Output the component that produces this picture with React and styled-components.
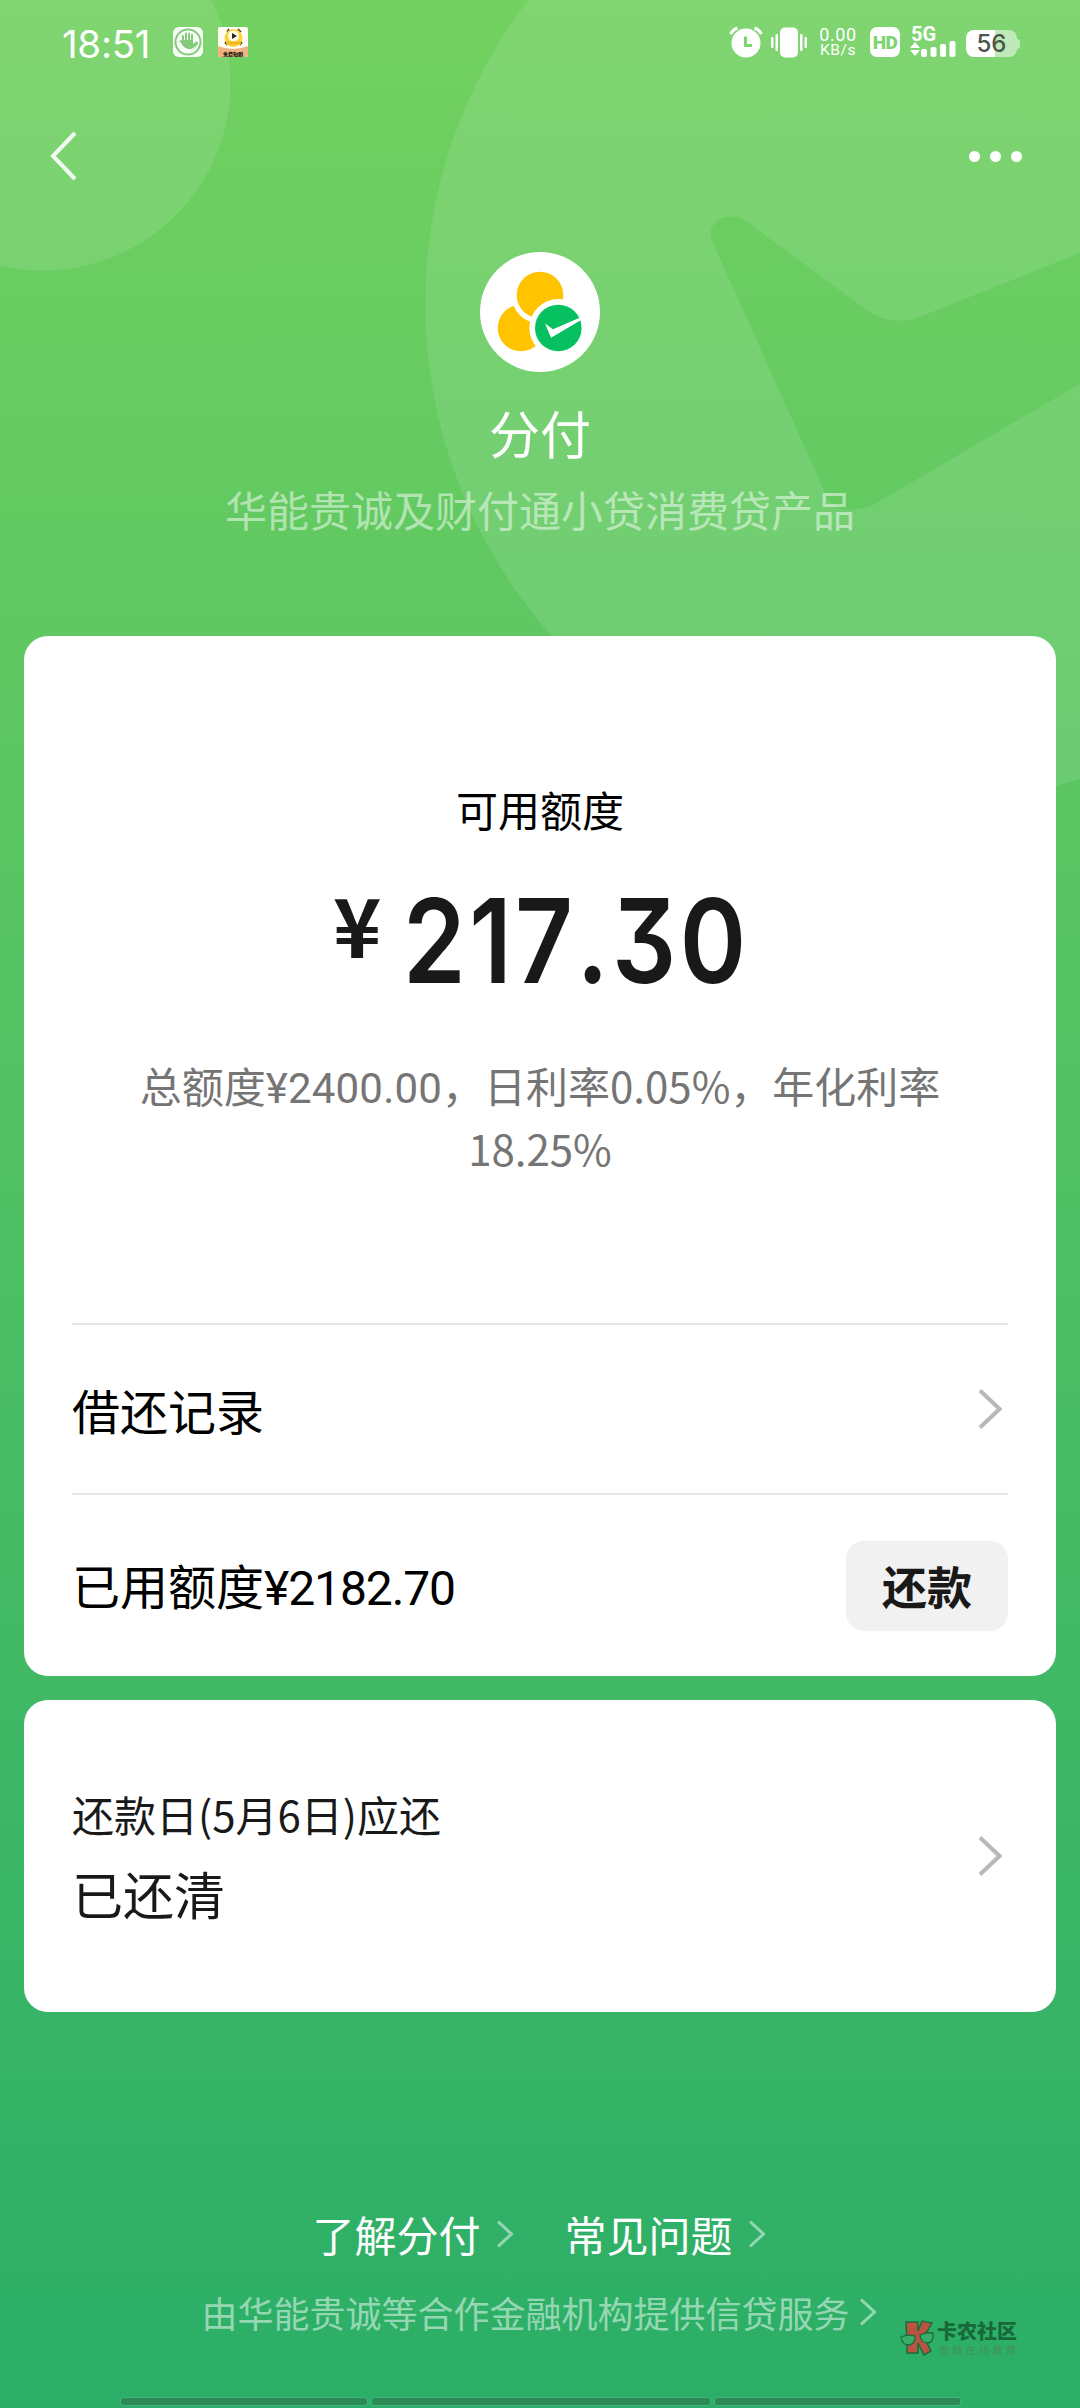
import styled, { createGlobalStyle } from "styled-components";

const GlobalStyle = createGlobalStyle`
    * {
        box-sizing: border-box;
    }

    body {
        margin: 0;
        font-family: "Noto Sans CJK SC", sans-serif;
    }
`;

const footerLinks = [
    { id: 1, label: '了解分付' },
    { id: 2, label: '常见问题' },
];

function Backdrop() {
    return (
        <BackdropSvg viewBox="0 0 1080 900">
            <circle cx="43" cy="83" r="187.5" fill="#fff" fillOpacity="0.1" />
            <path
                fill="#fff"
                fillOpacity="0.1"
                fillRule="evenodd"
                d="M925 -196a499.700 499.700 0 1 0 0.010 0Z
                   M713 243C704 226 722 210 743 219L868 311Q891 326 917 318L1100 245V372L873 505Q832 520 823 488Z"
            />
        </BackdropSvg>
    );
}

function Arrow({ width, height, color, stroke }) {
    return (
        <svg width={width} height={height} viewBox={`0 0 ${width} ${height}`} fill="none">
            <path
                d={`M2 1.500L${width - 2.5} ${height / 2}L2 ${height - 1.5}`}
                stroke={color}
                strokeWidth={stroke}
            />
        </svg>
    );
}

function StatusIcons() {
    return (
        <>
            <svg width="34" height="32" viewBox="0 0 34 32">
                <circle cx="17" cy="17" r="14.500" fill="#fff" />
                <path d="M1.500 8Q4 3.500 8.500 2M32.500 8Q30 3.500 25.500 2" stroke="#fff" strokeWidth="3" fill="none" />
                <path d="M16.500 10.500V19.500H23" stroke="#7dd570" strokeWidth="3" fill="none" />
            </svg>
            <VibrateSvg width="36" height="32" viewBox="0 0 36 32" fill="#fff">
                <rect x="9" y="1.500" width="18" height="30" rx="5" />
                <rect x="0" y="11" width="2.500" height="11" rx="1" />
                <rect x="4.500" y="8" width="2.500" height="17" rx="1" />
                <rect x="29" y="8" width="2.500" height="17" rx="1" />
                <rect x="33.500" y="11" width="2.500" height="11" rx="1" />
            </VibrateSvg>
        </>
    );
}

export default function App() {
    return (
        <Screen>
            <GlobalStyle />
            <Backdrop />

            <StatusBar>
                <Clock>18:51</Clock>
                <svg width="30" height="30" viewBox="0 0 30 30">
                    <rect width="30" height="30" rx="6" fill="#fff" fillOpacity="0.95" />
                    <circle cx="15" cy="15" r="12.500" fill="none" stroke="#83cb7b" strokeWidth="2" />
                    <path d="M10 14V9M13 13V6.500M16 13V6.500M19 14V8" stroke="#83cb7b" strokeWidth="2" strokeLinecap="round" />
                    <path d="M9 13H20V17L24 14L25 17Q21 25 14 24Q8 22 5 14Z" fill="#83cb7b" />
                    <path d="M6 17Q9 25 17 24Q22 22 24 18Q16 26 10 19L5 12Z" fill="#fff" />
                </svg>
                <AppBadge width="30" height="30" viewBox="0 0 30 30">
                    <rect width="30" height="30" rx="2" fill="#fffdf4" />
                    <path d="M0 19Q15 25 30 19V28Q30 30 28 30H2Q0 30 0 28Z" fill="#f0b183" />
                    <path d="M9 5L11 2M20 2L23 5M7 15L9 18M24 15L22 18" stroke="#4a3b18" strokeWidth="1.500" />
                    <circle cx="15.500" cy="11" r="9" fill="#fbd23c" />
                    <circle cx="15.500" cy="9" r="5.500" fill="#fffbe9" />
                    <path d="M14 6L19 9L14 12Z" fill="#2c2414" />
                    <path d="M8 16H23" stroke="#f7b51e" strokeWidth="3" />
                    <text x="15" y="28.600" textAnchor="middle" fontSize="5" fontWeight="900" fill="#231b12">免费短剧</text>
                </AppBadge>
                <Spacer />
                <StatusIcons />
                <NetSpeed>
                    <span>0.00</span>
                    <small>KB/s</small>
                </NetSpeed>
                <HdBadge>HD</HdBadge>
                <Signal>
                    <SignalType>5G</SignalType>
                    <svg width="46" height="16" viewBox="0 0 46 16" fill="#fff">
                        <path d="M0 7L5 1L10 7ZM0 9L5 15L10 9Z" />
                        <rect x="11" y="8" width="6" height="8" rx="2" />
                        <rect x="20.500" y="6" width="6" height="10" rx="2" />
                        <rect x="30" y="3" width="6" height="13" rx="2" />
                        <rect x="39.500" y="0" width="6" height="16" rx="2" />
                    </svg>
                </Signal>
                <Battery>56</Battery>
                <BatteryCap />
            </StatusBar>

            <NavBar>
                <svg width="30" height="52" viewBox="0 0 30 52" fill="none">
                    <path d="M26 3L4 26L26 49" stroke="#fff" strokeOpacity="0.9" strokeWidth="4" />
                </svg>
                <Dots>
                    <i />
                    <i />
                    <i />
                </Dots>
            </NavBar>

            <Header>
                <Logo viewBox="0 0 120 120">
                    <circle cx="60" cy="60" r="60" fill="#fff" />
                    <circle cx="41" cy="76" r="23.300" fill="#ffc300" />
                    <circle cx="60" cy="43" r="28.500" fill="#fff" />
                    <circle cx="60" cy="43" r="23.300" fill="#ffc300" />
                    <circle cx="78.300" cy="76" r="29" fill="#fff" />
                    <circle cx="78.300" cy="76" r="23.300" fill="#07c160" />
                    <path d="M65 71.500L73 77.300L99 66L102 67.500L71 85.700Z" fill="#fff" />
                </Logo>
                <Title>分付</Title>
                <Subtitle>华能贵诚及财付通小贷消费贷产品</Subtitle>
            </Header>

            <Card $height={1040}>
                <Quota>
                    <QuotaLabel>可用额度</QuotaLabel>
                    <Amount>
                        <Yen>¥</Yen>
                        <Figure>217.30</Figure>
                    </Amount>
                    <QuotaNote>
                        总额度<Num $spacing={0.2}>¥2400.00</Num>，日利率0.05%，年化利率
                        <br />
                        18.25%
                    </QuotaNote>
                </Quota>
                <Row $height={170}>
                    <span>借还记录</span>
                    <ArrowSlot>
                        <Arrow width={24} height={40} color="#b8b8b8" stroke={4} />
                    </ArrowSlot>
                </Row>
                <Row $height={180}>
                    <span>已用额度<Num $spacing={-1.1}>¥2182.70</Num></span>
                    <RepayButton>还款</RepayButton>
                </Row>
            </Card>

            <Card $height={312}>
                <Bill>
                    <BillText>
                        <BillDate>还款日(5月6日)应还</BillDate>
                        <BillState>已还清</BillState>
                    </BillText>
                    <ArrowSlot>
                        <Arrow width={24} height={40} color="#b8b8b8" stroke={4} />
                    </ArrowSlot>
                </Bill>
            </Card>

            <Footer>
                <FooterLinks>
                    {footerLinks.map((link) => (
                        <FooterLink key={link.id}>
                            {link.label}
                            <Arrow width={18} height={28} color="#95d7b3" stroke={3} />
                        </FooterLink>
                    ))}
                </FooterLinks>
                <Provider>
                    由华能贵诚等合作金融机构提供信贷服务
                    <Arrow width={18} height={28} color="#95d7b3" stroke={3} />
                </Provider>
            </Footer>

            <HomeBar>
                <HomeSegment $width={246} />
                <HomeSegment $width={338} />
                <HomeSegment $width={245} />
            </HomeBar>

            <Watermark>
                <svg width="35" height="36" viewBox="0 0 35 36">
                    <path
                        d="M6 2H18V11L22 1L32 3L24 17L31 31L24 35L18 23V33H7V22Z"
                        fill="#b8543f"
                        stroke="#1c6b3c"
                        strokeWidth="1.500"
                    />
                    <path d="M1 17Q8 14 15 16Q15 25 8.500 25Q2 25 1 17ZM20 15Q26 12 33 13Q34 22 28 23Q21 23 20 15Z" fill="#36ae6a" stroke="#1c6b3c" strokeWidth="1.300" />
                </svg>
                <WatermarkText>
                    <b>卡农社区</b>
                    <small>金融在线教育</small>
                </WatermarkText>
            </Watermark>
        </Screen>
    );
}

const Screen = styled.div`
    position: relative;
    display: flex;
    flex-direction: column;
    width: 1080px;
    height: 2408px;
    overflow: hidden;
    background: linear-gradient(to bottom, #72d160, #2bae67);
`;

const BackdropSvg = styled.svg`
    position: absolute;
    top: 0;
    left: 0;
    width: 1080px;
    height: 900px;
`;

const StatusBar = styled.div`
    position: relative;
    display: flex;
    align-items: center;
    height: 84px;
    padding: 0 60px 0 62px;
    color: #fff;
`;

const Clock = styled.span`
    width: 111px;
    padding-top: 4px;
    font-family: Inter, sans-serif;
    font-size: 38.500px;
    letter-spacing: -0.300px;
    white-space: nowrap;
`;

const AppBadge = styled.svg`
    margin-left: 15px;
`;

const Spacer = styled.div`
    flex: 1;
`;

const VibrateSvg = styled.svg`
    margin-left: 8px;
`;

const NetSpeed = styled.div`
    display: flex;
    flex-direction: column;
    align-items: center;
    width: 38px;
    margin: 0 13px 0 12px;
    font-family: Roboto, sans-serif;
    font-size: 18px;
    line-height: 17px;
    letter-spacing: 0.600px;

    small {
        font-size: 15.500px;
        line-height: 15px;
    }
`;

const HdBadge = styled.div`
    width: 30px;
    height: 30px;
    border-radius: 7px;
    background-color: #fff;
    color: #7dd570;
    font-family: Roboto, sans-serif;
    font-weight: 900;
    font-size: 19px;
    line-height: 31px;
    letter-spacing: -0.500px;
    text-align: center;
`;

const Signal = styled.div`
    display: flex;
    flex-direction: column;
    width: 46px;
    height: 30px;
    margin: 0 10px;
`;

const SignalType = styled.span`
    height: 14px;
    padding-left: 1px;
    font-family: Roboto, sans-serif;
    font-weight: 700;
    font-size: 20px;
    line-height: 14px;
`;

const Battery = styled.div`
    width: 51px;
    height: 27px;
    margin-top: 3px;
    border-radius: 8px;
    background: linear-gradient(to right, #fff 29px, rgba(255, 255, 255, 0.5) 29px);
    color: #4c554a;
    font-family: Inter, sans-serif;
    font-weight: 500;
    font-size: 24px;
    line-height: 28px;
    text-align: center;
`;

const BatteryCap = styled.div`
    width: 3px;
    height: 10px;
    margin-top: 3px;
    border-radius: 0 3px 3px 0;
    background-color: rgba(255, 255, 255, 0.5);
`;

const NavBar = styled.div`
    position: relative;
    display: flex;
    align-items: center;
    justify-content: space-between;
    height: 144px;
    padding: 0 58px 0 49px;
`;

const Dots = styled.div`
    display: flex;
    gap: 10px;

    i {
        width: 11px;
        height: 11px;
        border-radius: 50%;
        background-color: #fff;
    }
`;

const Header = styled.div`
    position: relative;
    display: flex;
    flex-direction: column;
    align-items: center;
    height: 408px;
    padding-top: 24px;
    color: #fff;
`;

const Logo = styled.svg`
    width: 120px;
    height: 120px;
`;

const Title = styled.div`
    margin-top: 25px;
    font-size: 51px;
    line-height: 70px;
`;

const Subtitle = styled.div`
    margin-top: 12px;
    color: rgba(255, 255, 255, 0.5);
    font-size: 42px;
    line-height: 60px;
`;

const Card = styled.div`
    position: relative;
    height: ${props => props.$height}px;
    margin: 0 24px 24px;
    padding: 0 48px;
    border-radius: 24px;
    background-color: #fff;
    flex-shrink: 0;
`;

const Quota = styled.div`
    display: flex;
    flex-direction: column;
    align-items: center;
    height: 687px;
    padding-top: 143px;
`;

const QuotaLabel = styled.div`
    color: #000;
    font-size: 42px;
    line-height: 60px;
`;

const Amount = styled.div`
    display: flex;
    align-items: flex-start;
    width: 414px;
    height: 120px;
    margin-top: 42px;
    color: #191919;
`;

const Yen = styled.span`
    flex: 0 0 70px;
    font-weight: 700;
    font-size: 82px;
    line-height: 84px;
`;

const Figure = styled.span`
    font-family: Inter, sans-serif;
    font-weight: 600;
    font-size: 117px;
    line-height: 119px;
    letter-spacing: 4px;
    font-kerning: none;
    font-feature-settings: "calt" 0, "cv09";
    transform: scaleX(0.86);
    transform-origin: left;
`;

const QuotaNote = styled.div`
    margin-top: 53px;
    color: #757575;
    font-size: 42px;
    line-height: 62.500px;
    text-align: center;
    white-space: nowrap;
`;

const Num = styled.span`
    font-family: Roboto, sans-serif;
    line-height: 1;
    letter-spacing: ${props => props.$spacing}px;
`;

const Row = styled.div`
    display: flex;
    align-items: center;
    justify-content: space-between;
    height: ${props => props.$height}px;
    border-top: 2px solid #e6e6e6;
    color: #000;
    font-size: 48px;
    line-height: 70px;
`;

const ArrowSlot = styled.div`
    display: flex;
    padding-right: 6px;
`;

const RepayButton = styled.button`
    width: 162px;
    height: 90px;
    margin-top: 4px;
    padding: 0;
    border: none;
    border-radius: 18px;
    background-color: #f1f1f1;
    color: #191919;
    font-family: inherit;
    font-weight: 700;
    font-size: 45px;
    line-height: 86px;
`;

const Bill = styled.div`
    display: flex;
    align-items: center;
    justify-content: space-between;
    height: 100%;
`;

const BillText = styled.div`
    display: flex;
    flex-direction: column;
    padding-top: 3px;
    color: #191919;
`;

const BillDate = styled.span`
    font-size: 42px;
    line-height: 70px;
`;

const BillState = styled.span`
    font-size: 51px;
    line-height: 88px;
`;

const Footer = styled.div`
    position: relative;
    display: flex;
    flex-direction: column;
    align-items: center;
    padding: 168px 2px 0 0;
`;

const FooterLinks = styled.div`
    display: flex;
    gap: 51px;
`;

const FooterLink = styled.div`
    display: flex;
    align-items: center;
    gap: 15px;
    color: #fff;
    font-size: 42px;
    line-height: 60px;
`;

const Provider = styled.div`
    display: flex;
    align-items: center;
    gap: 9px;
    margin-top: 20px;
    color: #95d7b3;
    font-size: 36px;
    line-height: 56px;
`;

const HomeBar = styled.div`
    position: relative;
    display: flex;
    justify-content: center;
    gap: 5px;
    margin-top: auto;
    padding-bottom: 3px;
`;

const HomeSegment = styled.div`
    width: ${props => props.$width}px;
    height: 7px;
    border-radius: 2px;
    background-color: #2b8a55;
    box-shadow: 0 0 0 1px #40b478;
`;

const Watermark = styled.div`
    position: absolute;
    left: 900px;
    top: 2320px;
    display: flex;
    gap: 2px;
`;

const WatermarkText = styled.div`
    display: flex;
    flex-direction: column;
    color: #17693a;

    b {
        font-size: 20px;
        line-height: 22px;
        font-weight: 900;
    }

    small {
        margin-top: 2px;
        padding-left: 2px;
        color: #44905f;
        font-size: 10.500px;
        line-height: 12px;
        letter-spacing: 2.800px;
    }
`;
